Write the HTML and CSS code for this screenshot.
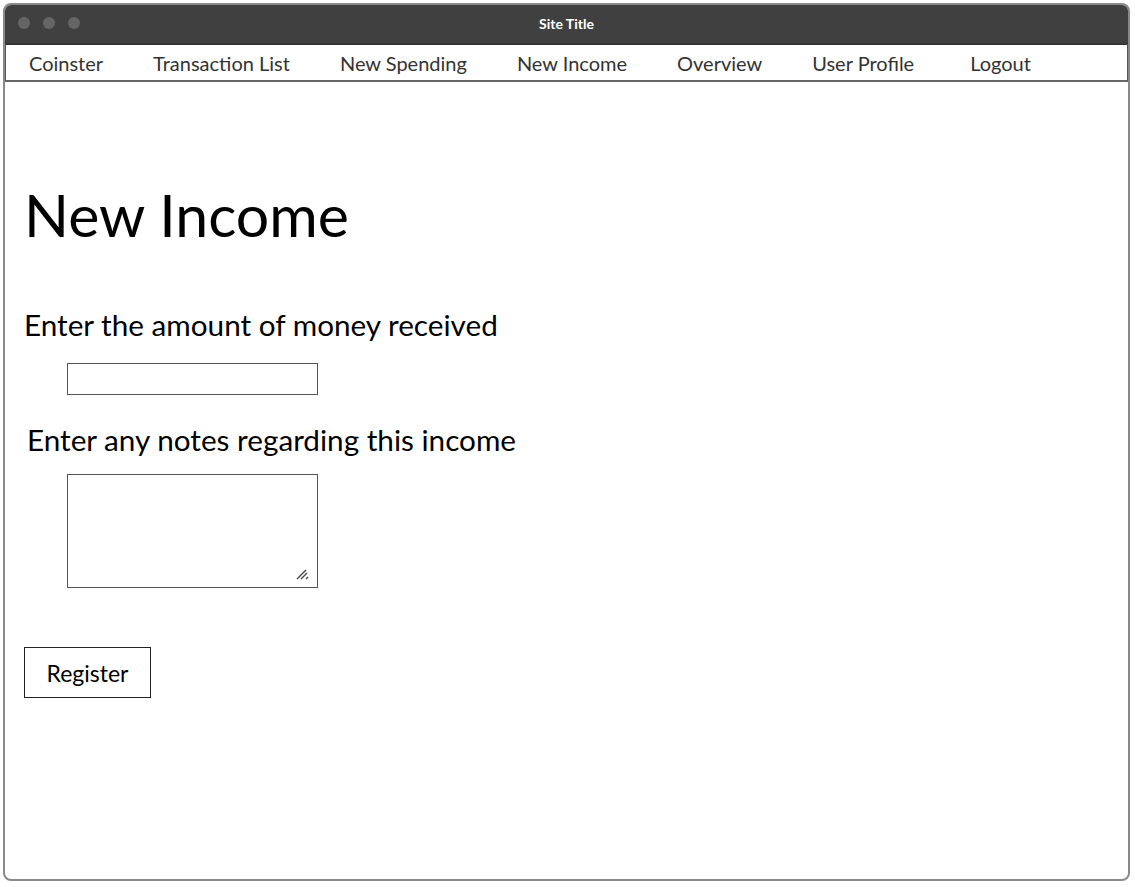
FILE: index.html
```html
<!DOCTYPE html>
<html>
<head>
<meta charset="utf-8">
<link rel="stylesheet" href="styles.css">
</head>
<body>
<div class="window">
  <div class="titlebar">
    <div class="dots"><span class="dot"></span><span class="dot"></span><span class="dot"></span></div>
    <div class="site-title">Site Title</div>
  </div>
  <nav class="nav">
    <span class="nav-item">Coinster</span>
    <span class="nav-item">Transaction List</span>
    <span class="nav-item">New Spending</span>
    <span class="nav-item">New Income</span>
    <span class="nav-item">Overview</span>
    <span class="nav-item">User Profile</span>
    <span class="nav-item nav-last">Logout</span>
  </nav>
  <main class="content">
    <h1 class="heading">New Income</h1>
    <div class="label label-amount">Enter the amount of money received</div>
    <div class="input"></div>
    <div class="label label-notes">Enter any notes regarding this income</div>
    <div class="textarea">
      <svg class="grip" width="13" height="13" viewBox="0 0 13 13"><path d="M1 12 L10 3 M5 12 L11 6 M10 12 L12 10" stroke="#444" stroke-width="1.4" fill="none"/></svg>
    </div>
    <div class="button">Register</div>
  </main>
</div>
</body>
</html>
```
FILE: styles.css
```css
* { box-sizing: border-box; }
html, body { margin: 0; padding: 0; background: #fff; }
body { font-family: "Lato", "Open Sans", sans-serif; color: #000; }
.window {
  margin: 3px 5px 0 3px;
  height: 878px;
  border: 2px solid #8a8a8a;
  border-radius: 8px;
  overflow: hidden;
  display: flex;
  flex-direction: column;
}
.titlebar {
  height: 38px;
  background: #404040;
  display: flex;
  align-items: center;
  position: relative;
  flex: none;
}
.dots { display: flex; gap: 13px; padding-left: 13px; margin-top: -3px; }
.dot { width: 12px; height: 12px; border-radius: 50%; background: #656565; }
.site-title {
  position: absolute;
  left: 0; right: 0;
  top: 10px;
  text-align: center;
  color: #fff;
  font-weight: bold;
  font-size: 14px;
  line-height: 17px;
}
.nav {
  height: 39px;
  flex: none;
  border: 1px solid #555;
  border-top: 2px solid #333;
  border-bottom: 2px solid #666;
  display: flex;
  align-items: center;
  gap: 50px;
  padding-left: 23px;
  font-size: 20px;
  color: #333;
}
.nav-last { margin-left: 6px; }
.content { padding: 98px 0 0 19px; }
.heading {
  margin: 0;
  font-weight: normal;
  font-size: 59px;
  line-height: 70px;
}
.label { font-size: 29.7px; line-height: 34px; }
.label-amount { margin-top: 58px; }
.input {
  margin: 21px 0 0 43px;
  width: 251px;
  height: 32px;
  border: 1.5px solid #555;
}
.label-notes { margin-top: 28px; margin-left: 3px; }
.textarea {
  margin: 17px 0 0 43px;
  width: 251px;
  height: 114px;
  border: 1.5px solid #555;
  position: relative;
}
.grip { position: absolute; right: 8px; bottom: 7px; }
.button {
  margin-top: 59px;
  width: 127px;
  height: 51px;
  border: 1.5px solid #222;
  display: flex;
  align-items: center;
  justify-content: center;
  font-size: 23px;
}
```
